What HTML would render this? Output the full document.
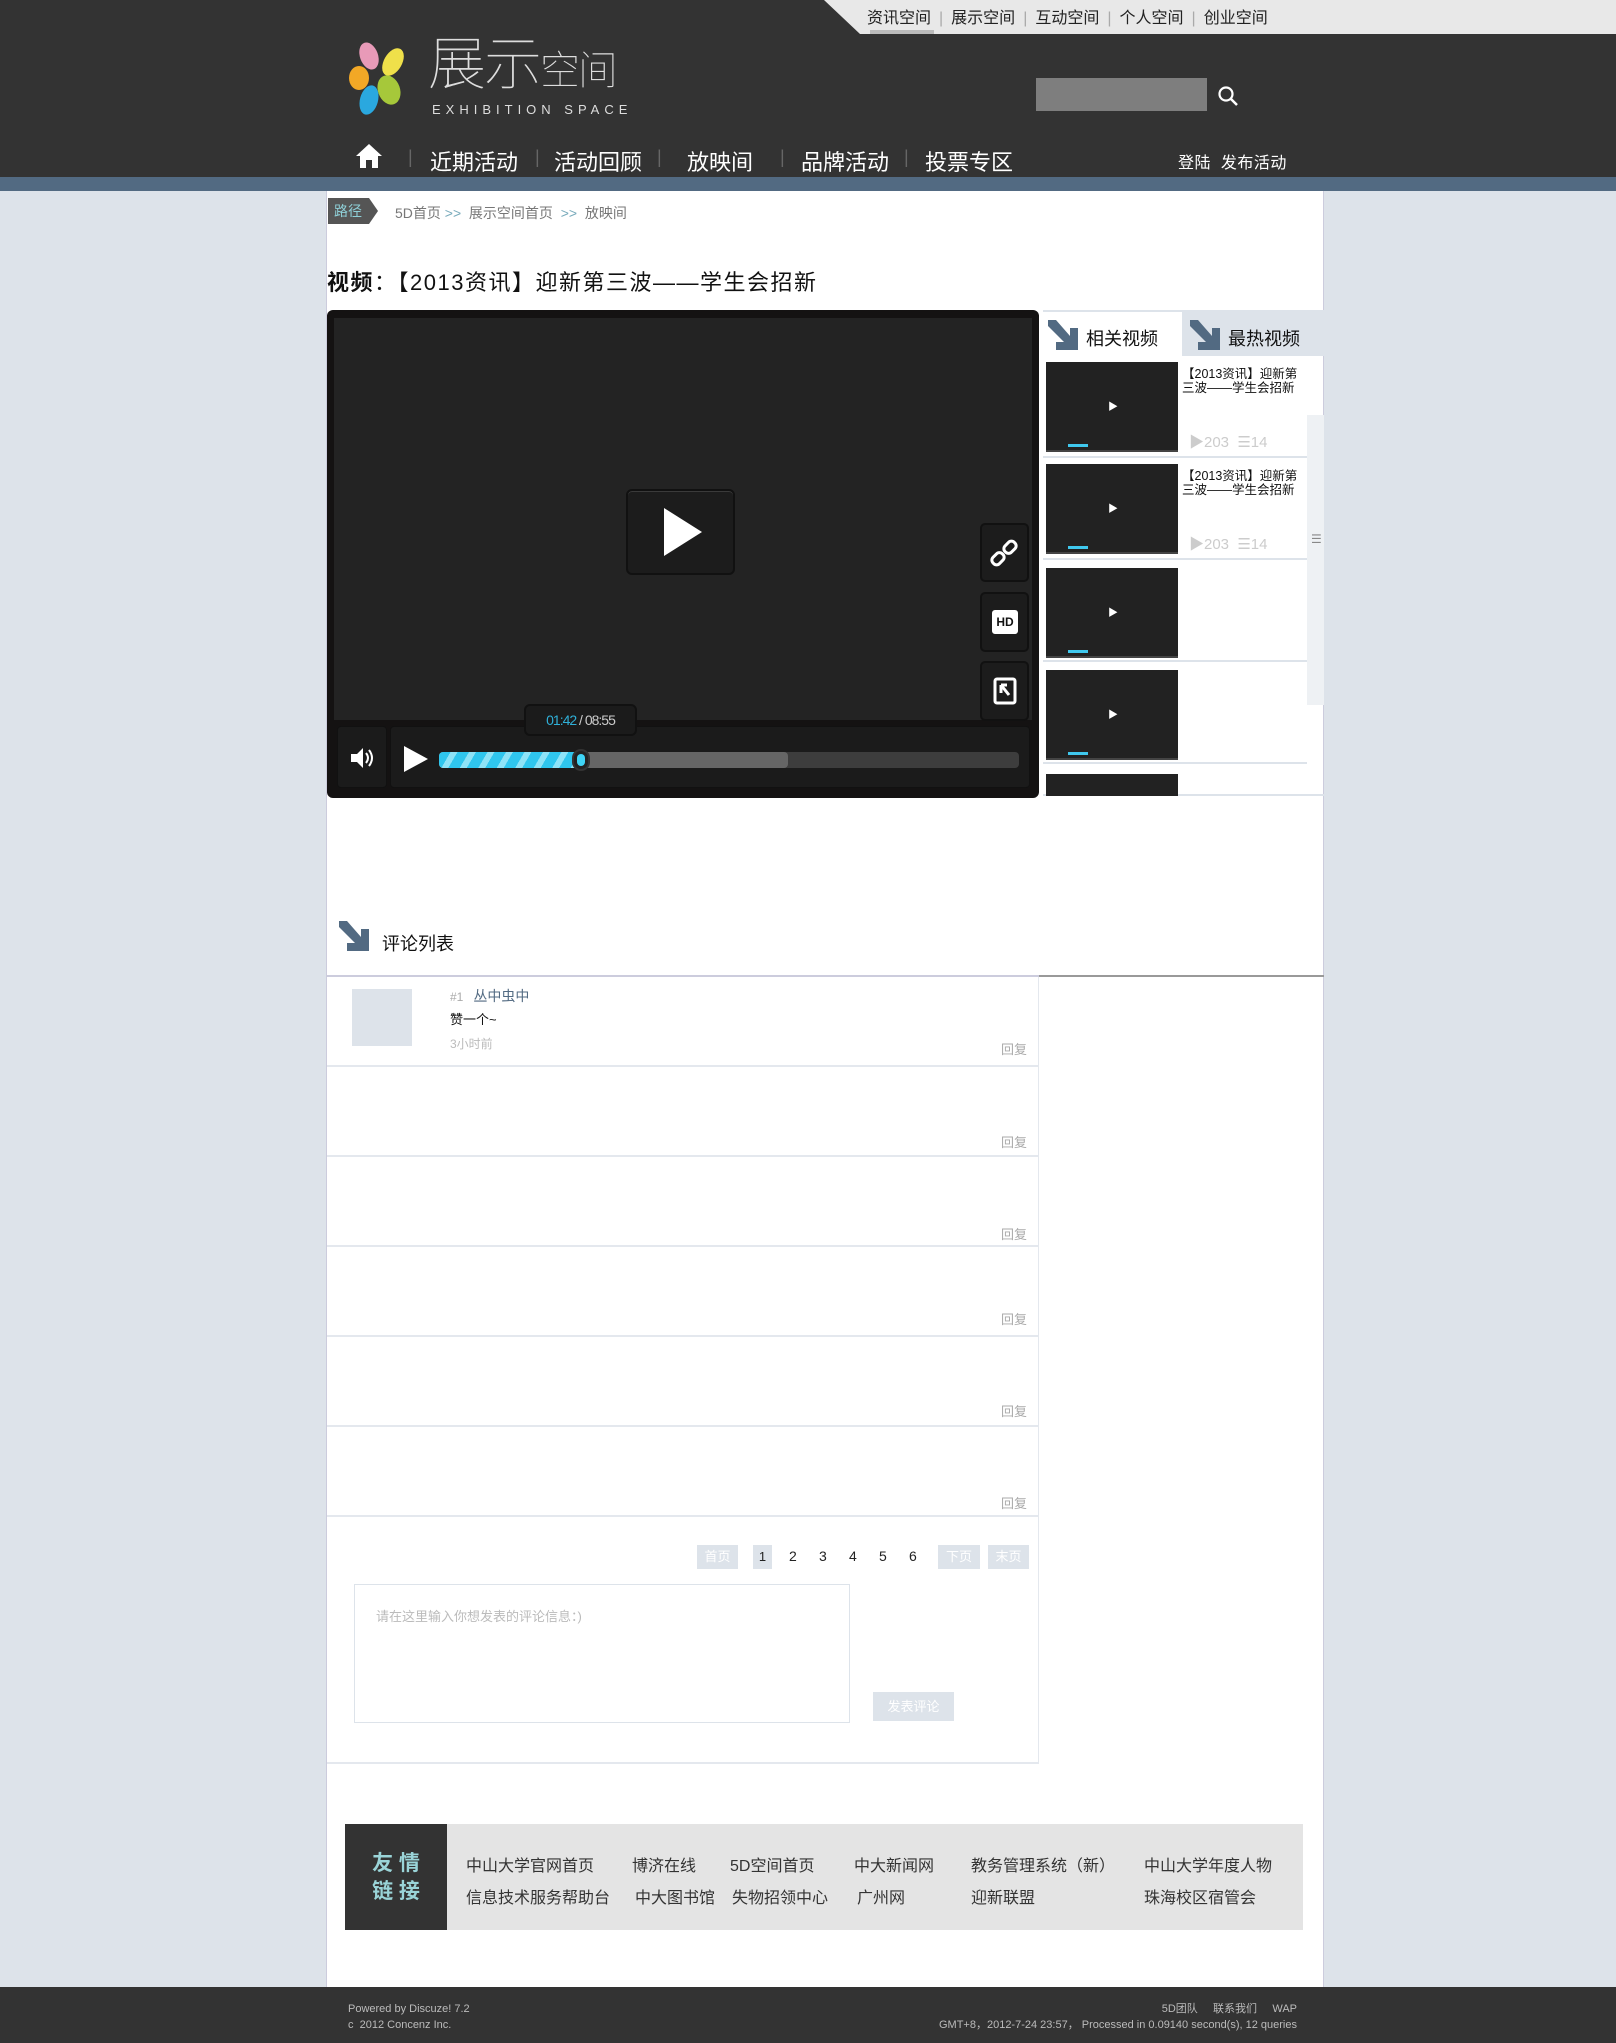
<!DOCTYPE html>
<html><head><meta charset="utf-8"><style>
*{margin:0;padding:0;box-sizing:border-box}
body{width:1616px;height:2043px;background:#dde3ea;position:relative;overflow:hidden;font-family:"Liberation Sans","Noto Sans CJK SC",sans-serif;color:#222}
.a{position:absolute}
.hdr{left:0;top:0;width:1616px;height:177px;background:#333}
.band{left:0;top:177px;width:1616px;height:14px;background:#526a82}
.page{left:326px;top:191px;width:998px;height:1796px;background:#fff;border-left:1px solid #ccd;border-right:1px solid #ccd}
.top{color:#222;font-size:16px;top:4px}
.top span{color:#aaa;margin:0 8px}
.nav{color:#fff;font-size:22px;top:145px}
.sep{color:#666;font-size:18px;top:147px}
.ft{left:0;top:1987px;width:1616px;height:56px;background:#333;color:#bbb;font-size:11px}
.thumb{width:132px;height:90px;background:#222;border-bottom:2px solid #444}
.it{left:1043px;width:264px;height:102px;border-bottom:2px solid #dde3ea}
.rep{font-size:13px;color:#aaa}
.row{left:327px;width:712px;height:90px;border-bottom:2px solid #e4e8ee}
.pg{font-size:14px;top:1548px;color:#222}
.pb{background:#dde3ea;color:#fff;font-size:13px;text-align:center;line-height:24px;height:24px;top:1545px}
.fl{font-size:16px;color:#333}
</style></head><body>
<div class="a hdr"></div>
<div class="a" style="left:824px;top:0;width:792px;height:34px;background:#e8e8e8;clip-path:polygon(0 0,100% 0,100% 100%,36px 100%)"></div>
<div class="a" style="left:870px;top:30px;width:64px;height:4px;background:#bbb"></div>
<div class="a top" style="left:867px">资讯空间<span>|</span>展示空间<span>|</span>互动空间<span>|</span>个人空间<span>|</span>创业空间</div>
<svg class="a" style="left:345px;top:40px" width="80" height="78" viewBox="0 0 80 78">
<ellipse cx="24" cy="16" rx="9" ry="14" fill="#e89ab8" transform="rotate(-20 24 16)"/>
<ellipse cx="48" cy="22" rx="9" ry="15" fill="#efe04a" transform="rotate(30 48 22)"/>
<ellipse cx="14" cy="38" rx="10" ry="12" fill="#f2a826"/>
<ellipse cx="44" cy="50" rx="11" ry="15" fill="#a6c83a" transform="rotate(-20 44 50)"/>
<ellipse cx="24" cy="60" rx="9" ry="15" fill="#2aa8df" transform="rotate(15 24 60)"/>
</svg>
<div class="a" style="left:428px;top:30px;color:#ddd;font-size:58px;font-weight:100;letter-spacing:-2px;line-height:70px">展示<span style="font-size:40px">空间</span></div>
<div class="a" style="left:432px;top:102px;color:#ddd;font-size:13px;letter-spacing:5px">EXHIBITION SPACE</div>
<div class="a" style="left:1036px;top:78px;width:171px;height:33px;background:#7e7e7e"></div>
<svg class="a" style="left:1216px;top:84px" width="24" height="24"><circle cx="10" cy="10" r="6.5" fill="none" stroke="#fff" stroke-width="2.2"/><line x1="15" y1="15" x2="21" y2="21" stroke="#fff" stroke-width="2.5"/></svg>
<svg class="a" style="left:354px;top:142px" width="30" height="28"><path d="M15 2 L2 14 L6 14 L6 26 L12 26 L12 18 L18 18 L18 26 L24 26 L24 14 L28 14 Z" fill="#fff"/></svg>
<div class="a sep" style="left:408px">|</div>
<div class="a nav" style="left:430px">近期活动</div>
<div class="a sep" style="left:535px">|</div>
<div class="a nav" style="left:554px">活动回顾</div>
<div class="a sep" style="left:657px">|</div>
<div class="a nav" style="left:687px">放映间</div>
<div class="a sep" style="left:780px">|</div>
<div class="a nav" style="left:801px">品牌活动</div>
<div class="a sep" style="left:904px">|</div>
<div class="a nav" style="left:925px">投票专区</div>
<div class="a" style="left:1178px;top:149px;color:#fff;font-size:16px;letter-spacing:0.5px">登陆&nbsp;&nbsp;发布活动</div>
<div class="a band"></div>
<div class="a page"></div>
<div class="a" style="left:328px;top:198px;width:50px;height:26px;background:#555;clip-path:polygon(0 0,82% 0,100% 50%,82% 100%,0 100%);color:#8fd0d8;font-size:14px;line-height:26px;padding-left:6px">路径</div>
<div class="a" style="left:395px;top:203px;font-size:14px;color:#777">5D首页 <span style="color:#7ab">&gt;&gt;</span> &nbsp;展示空间首页 &nbsp;<span style="color:#7ab">&gt;&gt;</span> &nbsp;放映间</div>
<div class="a" style="left:327px;top:265px;font-size:22px;color:#111;letter-spacing:1.5px"><b>视频</b>：【2013资讯】迎新第三波——学生会招新</div>
<div class="a" style="left:327px;top:310px;width:712px;height:488px;background:#141212;border-radius:6px"></div>
<div class="a" style="left:334px;top:318px;width:698px;height:402px;background:#232323"></div>
<div class="a" style="left:626px;top:489px;width:109px;height:86px;background:#1c1c1c;border:2px solid #111;border-radius:6px;box-shadow:inset 0 1px 0 #3a3a3a"></div>
<svg class="a" style="left:660px;top:505px" width="46" height="54"><path d="M4 3 L42 27 L4 51 Z" fill="#fff"/></svg>
<div class="a" style="left:980px;top:523px;width:49px;height:59px;background:#1c1c1c;border:2px solid #111;border-radius:5px"></div>
<div class="a" style="left:980px;top:592px;width:49px;height:60px;background:#1c1c1c;border:2px solid #111;border-radius:5px"></div>
<div class="a" style="left:980px;top:661px;width:49px;height:60px;background:#1c1c1c;border:2px solid #111;border-radius:5px"></div>
<svg class="a" style="left:990px;top:538px" width="30" height="30"><g fill="none" stroke="#fff" stroke-width="3"><rect x="4" y="14" width="9" height="13" rx="4" transform="rotate(45 8 20)"/><rect x="15" y="3" width="9" height="13" rx="4" transform="rotate(45 20 10)"/></g></svg>
<div class="a" style="left:992px;top:610px;width:26px;height:24px;background:#fff;border-radius:3px;color:#111;font-size:12px;font-weight:bold;text-align:center;line-height:24px">HD</div>
<svg class="a" style="left:993px;top:677px" width="24" height="28"><rect x="2" y="2" width="20" height="24" rx="2" fill="none" stroke="#fff" stroke-width="3"/><path d="M8 8 L8 16 M8 8 L14 8 M8 8 L16 18" stroke="#fff" stroke-width="3"/></svg>
<div class="a" style="left:337px;top:726px;width:50px;height:62px;background:#1b1b1b;border:1px solid #111;border-radius:4px"></div>
<svg class="a" style="left:349px;top:745px" width="28" height="26"><path d="M2 9 L8 9 L14 3 L14 23 L8 17 L2 17 Z" fill="#fff"/><path d="M17 8 Q21 13 17 18 M20 5 Q26 13 20 21" stroke="#fff" stroke-width="2" fill="none"/></svg>
<div class="a" style="left:390px;top:726px;width:640px;height:62px;background:#1b1b1b;border:1px solid #111;border-radius:4px"></div>
<svg class="a" style="left:402px;top:744px" width="28" height="30"><path d="M2 2 L26 15 L2 28 Z" fill="#fff"/></svg>
<div class="a" style="left:439px;top:752px;width:580px;height:16px;background:#3d3d3d;border-radius:4px"></div>
<div class="a" style="left:439px;top:752px;width:349px;height:16px;background:#666;border-radius:4px"></div>
<div class="a" style="left:439px;top:752px;width:142px;height:16px;border-radius:4px;background:repeating-linear-gradient(120deg,#2fc6ee 0 10px,#8ee3f7 10px 16px)"></div>
<div class="a" style="left:572px;top:749px;width:18px;height:22px;border-radius:9px;background:#222;border:2px solid #333"></div>
<div class="a" style="left:577px;top:754px;width:8px;height:12px;border-radius:4px;background:#3fd4f5"></div>
<div class="a" style="left:524px;top:704px;width:113px;height:32px;background:#1b1b1b;border:2px solid #111;border-radius:6px;color:#ccc;font-size:14px;text-align:center;line-height:28px;letter-spacing:-1px"><span style="color:#2fb0d8">01:42</span> / 08:55</div>
<div class="a" style="left:1043px;top:310px;width:281px;height:486px;border-top:2px solid #dde3ea;border-bottom:2px solid #dde3ea"></div>
<div class="a" style="left:1182px;top:312px;width:142px;height:44px;background:#dde3ea"></div>
<svg class="a" style="left:1046px;top:318px" width="34" height="34"><path d="M2 2 L10 2 L24 18 L24 10 L32 10 L32 32 L10 32 L10 24 L18 24 L2 8 Z" fill="#526a82"/></svg>
<div class="a" style="left:1086px;top:325px;font-size:18px;color:#111">相关视频</div>
<svg class="a" style="left:1188px;top:318px" width="34" height="34"><path d="M2 2 L10 2 L24 18 L24 10 L32 10 L32 32 L10 32 L10 24 L18 24 L2 8 Z" fill="#526a82"/></svg>
<div class="a" style="left:1228px;top:325px;font-size:18px;color:#111">最热视频</div>
<div class="a" style="left:1307px;top:415px;width:17px;height:290px;background:#eef1f4"></div>
<div class="a" style="left:1311px;top:532px;font-size:12px;color:#888">☰</div>
<div class="a it" style="top:356px"></div>
<div class="a it" style="top:458px"></div>
<div class="a it" style="top:560px"></div>
<div class="a it" style="top:662px"></div>
<div class="a thumb" style="left:1046px;top:362px"></div>
<div class="a thumb" style="left:1046px;top:464px"></div>
<div class="a thumb" style="left:1046px;top:568px"></div>
<div class="a thumb" style="left:1046px;top:670px"></div>
<div class="a" style="left:1046px;top:774px;width:132px;height:22px;background:#222"></div>
<div class="a" style="left:1108px;top:398px;color:#fff;font-size:10px">▶</div>
<div class="a" style="left:1108px;top:500px;color:#fff;font-size:10px">▶</div>
<div class="a" style="left:1108px;top:604px;color:#fff;font-size:10px">▶</div>
<div class="a" style="left:1108px;top:706px;color:#fff;font-size:10px">▶</div>
<div class="a" style="left:1068px;top:444px;width:20px;height:3px;background:#3fc8ee"></div>
<div class="a" style="left:1068px;top:546px;width:20px;height:3px;background:#3fc8ee"></div>
<div class="a" style="left:1068px;top:650px;width:20px;height:3px;background:#3fc8ee"></div>
<div class="a" style="left:1068px;top:752px;width:20px;height:3px;background:#3fc8ee"></div>
<div class="a" style="left:1182px;top:367px;width:122px;font-size:12.5px;line-height:14px;color:#111">【2013资讯】迎新第三波——学生会招新</div>
<div class="a" style="left:1189px;top:431px;font-size:15px;color:#ccc">▶203 &nbsp;☰14</div>
<div class="a" style="left:1182px;top:469px;width:122px;font-size:12.5px;line-height:14px;color:#111">【2013资讯】迎新第三波——学生会招新</div>
<div class="a" style="left:1189px;top:533px;font-size:15px;color:#ccc">▶203 &nbsp;☰14</div>
<svg class="a" style="left:337px;top:919px" width="34" height="34"><path d="M2 2 L10 2 L24 18 L24 10 L32 10 L32 32 L10 32 L10 24 L18 24 L2 8 Z" fill="#526a82"/></svg>
<div class="a" style="left:382px;top:930px;font-size:18px;color:#111">评论列表</div>
<div class="a" style="left:327px;top:975px;width:712px;height:2px;background:#ccd"></div>
<div class="a" style="left:1039px;top:975px;width:285px;height:2px;background:#999"></div>
<div class="a" style="left:1038px;top:977px;width:1px;height:787px;background:#e4e8ee"></div>
<div class="a" style="left:327px;top:1762px;width:712px;height:2px;background:#e4e8ee"></div>
<div class="a row" style="top:977px"></div>
<div class="a row" style="top:1067px"></div>
<div class="a row" style="top:1157px"></div>
<div class="a row" style="top:1247px"></div>
<div class="a row" style="top:1337px"></div>
<div class="a row" style="top:1427px"></div>
<div class="a" style="left:352px;top:989px;width:60px;height:57px;background:#dde3ea"></div>
<div class="a" style="left:450px;top:986px;font-size:12px;color:#aaa">#1 &nbsp;&nbsp;<span style="color:#526a82;font-size:14px">丛中虫中</span></div>
<div class="a" style="left:450px;top:1009px;font-size:13px;color:#111">赞一个~</div>
<div class="a" style="left:450px;top:1035px;font-size:12px;color:#bbb">3小时前</div>
<div class="a rep" style="left:1001px;top:1039px">回复</div>
<div class="a rep" style="left:1001px;top:1132px">回复</div>
<div class="a rep" style="left:1001px;top:1224px">回复</div>
<div class="a rep" style="left:1001px;top:1309px">回复</div>
<div class="a rep" style="left:1001px;top:1401px">回复</div>
<div class="a rep" style="left:1001px;top:1493px">回复</div>
<div class="a pb" style="left:697px;width:41px">首页</div>
<div class="a pb" style="left:753px;width:19px;color:#222">1</div>
<div class="a pg" style="left:789px">2</div>
<div class="a pg" style="left:819px">3</div>
<div class="a pg" style="left:849px">4</div>
<div class="a pg" style="left:879px">5</div>
<div class="a pg" style="left:909px">6</div>
<div class="a pb" style="left:938px;width:42px">下页</div>
<div class="a pb" style="left:988px;width:41px">末页</div>
<div class="a" style="left:354px;top:1584px;width:496px;height:139px;border:1px solid #dde3ea"></div>
<div class="a" style="left:376px;top:1606px;font-size:13px;color:#bbb">请在这里输入你想发表的评论信息：)</div>
<div class="a" style="left:873px;top:1692px;width:81px;height:29px;background:#dde3ea;color:#fff;font-size:13px;text-align:center;line-height:29px">发表评论</div>
<div class="a" style="left:345px;top:1824px;width:958px;height:106px;background:#e4e4e4"></div>
<div class="a" style="left:345px;top:1824px;width:102px;height:106px;background:#333;color:#9ad4d8;font-size:21px;font-weight:bold;line-height:28px;text-align:center;padding-top:26px">友 情<br>链 接</div>
<div class="a fl" style="left:466px;top:1852px">中山大学官网首页</div>
<div class="a fl" style="left:632px;top:1852px">博济在线</div>
<div class="a fl" style="left:730px;top:1852px">5D空间首页</div>
<div class="a fl" style="left:854px;top:1852px">中大新闻网</div>
<div class="a fl" style="left:971px;top:1852px">教务管理系统（新）</div>
<div class="a fl" style="left:1144px;top:1852px">中山大学年度人物</div>
<div class="a fl" style="left:466px;top:1884px">信息技术服务帮助台</div>
<div class="a fl" style="left:635px;top:1884px">中大图书馆</div>
<div class="a fl" style="left:732px;top:1884px">失物招领中心</div>
<div class="a fl" style="left:857px;top:1884px">广州网</div>
<div class="a fl" style="left:971px;top:1884px">迎新联盟</div>
<div class="a fl" style="left:1144px;top:1884px">珠海校区宿管会</div>
<div class="a ft"></div>
<div class="a" style="left:348px;top:2001px;font-size:11px;color:#bbb;line-height:16px">Powered by Discuze! 7.2<br>c&nbsp; 2012 Concenz Inc.</div>
<div class="a" style="left:900px;top:2001px;width:397px;font-size:11px;color:#bbb;line-height:16px;text-align:right">5D团队 &nbsp;&nbsp;&nbsp; 联系我们 &nbsp;&nbsp;&nbsp; WAP<br>GMT+8，2012-7-24 23:57， Processed in 0.09140 second(s), 12 queries</div>
</body></html>
